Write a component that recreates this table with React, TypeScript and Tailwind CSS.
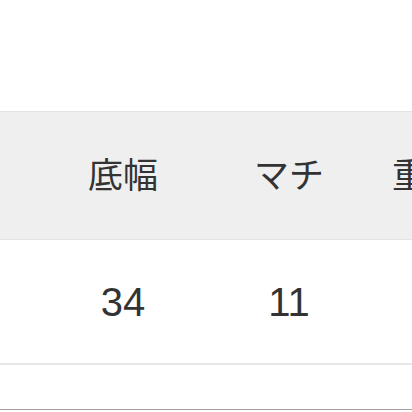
import React from 'react';

const headers = ['底幅', 'マチ'];
const values = ['34', '11'];

export default function App() {
  return (
    <div
      className="w-[412px] h-[412px] overflow-hidden bg-white text-[#333]"
      style={{ fontFamily: '"Liberation Sans", "Noto Sans CJK JP", sans-serif' }}
    >
      <div className="h-[111px]" />
      {/* header row */}
      <div className="flex h-[129px] bg-[#efefef] border-t border-b border-[#e4e4e4] items-center">
        <div className="w-[40px] shrink-0" />
        {headers.map((h) => (
          <div key={h} className="w-[166px] shrink-0 text-center text-[35px] leading-none pb-[1px]">
            {h}
          </div>
        ))}
        <div className="w-[166px] shrink-0 pl-[20px] text-left text-[35px] leading-none pb-[1px] whitespace-nowrap">
          重量
        </div>
      </div>
      {/* value row */}
      <div className="flex h-[125px] items-center border-b-2 border-[#e8e8e8]">
        <div className="w-[40px] shrink-0" />
        {values.map((v, i) => (
          <div key={i} className="w-[166px] shrink-0 text-center text-[40px] leading-none">
            {v}
          </div>
        ))}
      </div>
      <div className="h-[45px] border-b border-[#a0a0a0]" />
    </div>
  );
}
